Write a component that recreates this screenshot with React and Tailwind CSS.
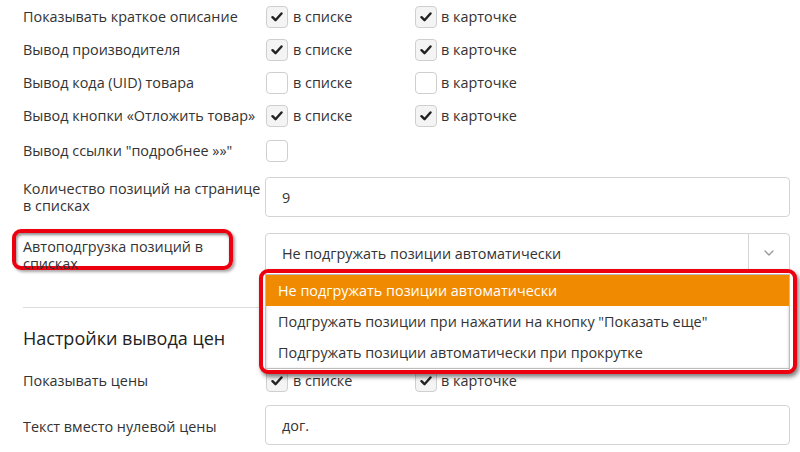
import { ChevronDown } from "lucide-react";

function Check({ on }) {
    return (
        <span className={`w-[22px] h-[22px] rounded-[4px] border border-[#cfcfcf] flex items-center justify-center shrink-0 ${on ? "bg-[#f4f4f4]" : "bg-white"}`}>
            {on && (
                <svg width="12" height="10" viewBox="0 0 12 10">
                    <path d="M1.5 5.2 L4.5 8.2 L10.5 1.5" fill="none" stroke="#222" strokeWidth="2.4" strokeLinecap="round" strokeLinejoin="round" />
                </svg>
            )}
        </span>
    )
}

function CheckRow({ label, list, card, className = "" }) {
    return (
        <div className={`flex items-center h-[33px] ${className}`}>
            <div className="w-[242px] shrink-0">{label}</div>
            <div className="flex items-center gap-[5px] w-[150px] pl-px">
                <Check on={list} />
                <span>в списке</span>
            </div>
            {card !== undefined && (
                <div className="flex items-center gap-[4px]">
                    <Check on={card} />
                    <span>в карточке</span>
                </div>
            )}
        </div>
    )
}

export default function App() {
    const options = [
        "Не подгружать позиции автоматически",
        'Подгружать позиции при нажатии на кнопку "Показать еще"',
        "Подгружать позиции автоматически при прокрутке",
    ]

    return (
        <div className="relative w-[800px] h-[452px] overflow-hidden bg-white text-[#333] text-[14.4px] leading-[17px] font-['Open_Sans',sans-serif]">
            <div className="pl-[23px] pr-[10px]">
                <CheckRow label="Показывать краткое описание" list card />
                <CheckRow label="Вывод производителя" list card />
                <CheckRow label="Вывод кода (UID) товара" list={false} card={false} />
                <CheckRow label="Вывод кнопки «Отложить товар»" list card />
                <div className="flex items-center h-[33px] mt-[2px]">
                    <div className="w-[242px] shrink-0">Вывод ссылки "подробнее »»"</div>
                    <div className="pl-px"><Check on={false} /></div>
                </div>

                <div className="flex items-center mt-[10px]">
                    <div className="w-[242px] shrink-0">Количество позиций на странице<br />в списках</div>
                    <div className="flex-1 h-[40px] border border-[#d4d4d4] rounded-[4px] flex items-center px-[16px]">9</div>
                </div>

                <div className="flex items-center mt-[16px]">
                    <div className="w-[242px] shrink-0 relative pt-[3px]">
                        <div className="absolute left-[-11px] top-[-6px] w-[221px] h-[41px] rounded-[9px] border-4 border-[#ec0010] shadow-[inset_1px_2px_3px_rgba(0,0,0,0.45),2px_2px_3px_rgba(0,0,0,0.35)]"></div>
                        <div className="relative">Автоподгрузка позиций в<br />списках</div>
                    </div>
                    <div className="flex-1 h-[40px] border border-[#d4d4d4] rounded-[4px] flex items-center">
                        <span className="flex-1 px-[16px]">Не подгружать позиции автоматически</span>
                        <span className="w-[41px] h-full border-l border-[#d4d4d4] flex items-center justify-center text-[#999]">
                            <ChevronDown size={16} strokeWidth={2} />
                        </span>
                    </div>
                </div>

                <div className="mt-[34px] border-t border-[#dcdcdc]"></div>

                <h2 className="mt-[18px] text-[18px] leading-[24px] text-[#222]">Настройки вывода цен</h2>

                <CheckRow label="Показывать цены" list card className="mt-[14px]" />

                <div className="flex items-center mt-[8px]">
                    <div className="w-[242px] shrink-0 pt-[3px]">Текст вместо нулевой цены</div>
                    <div className="flex-1 h-[40px] border border-[#d4d4d4] rounded-[4px] flex items-center px-[16px]">дог.</div>
                </div>
            </div>

            <div className="absolute left-[259px] top-[269px] border-4 border-[#ec0010] rounded-[9px] bg-white pt-px pb-[1px] pl-[2px] pr-[3px] shadow-[2px_3px_4px_rgba(0,0,0,0.5)]">
                <div className="w-[525px] border border-[#bdbdbd] bg-white shadow-[inset_0_1px_3px_rgba(0,0,0,0.25)]">
                    {options.map((o, i) => (
                        <div key={o} className={`h-[31px] flex items-center px-[12px] ${i === 0 ? "bg-[#f08a00] text-white" : "text-[#333]"}`}>{o}</div>
                    ))}
                </div>
            </div>
        </div>
    )
}
